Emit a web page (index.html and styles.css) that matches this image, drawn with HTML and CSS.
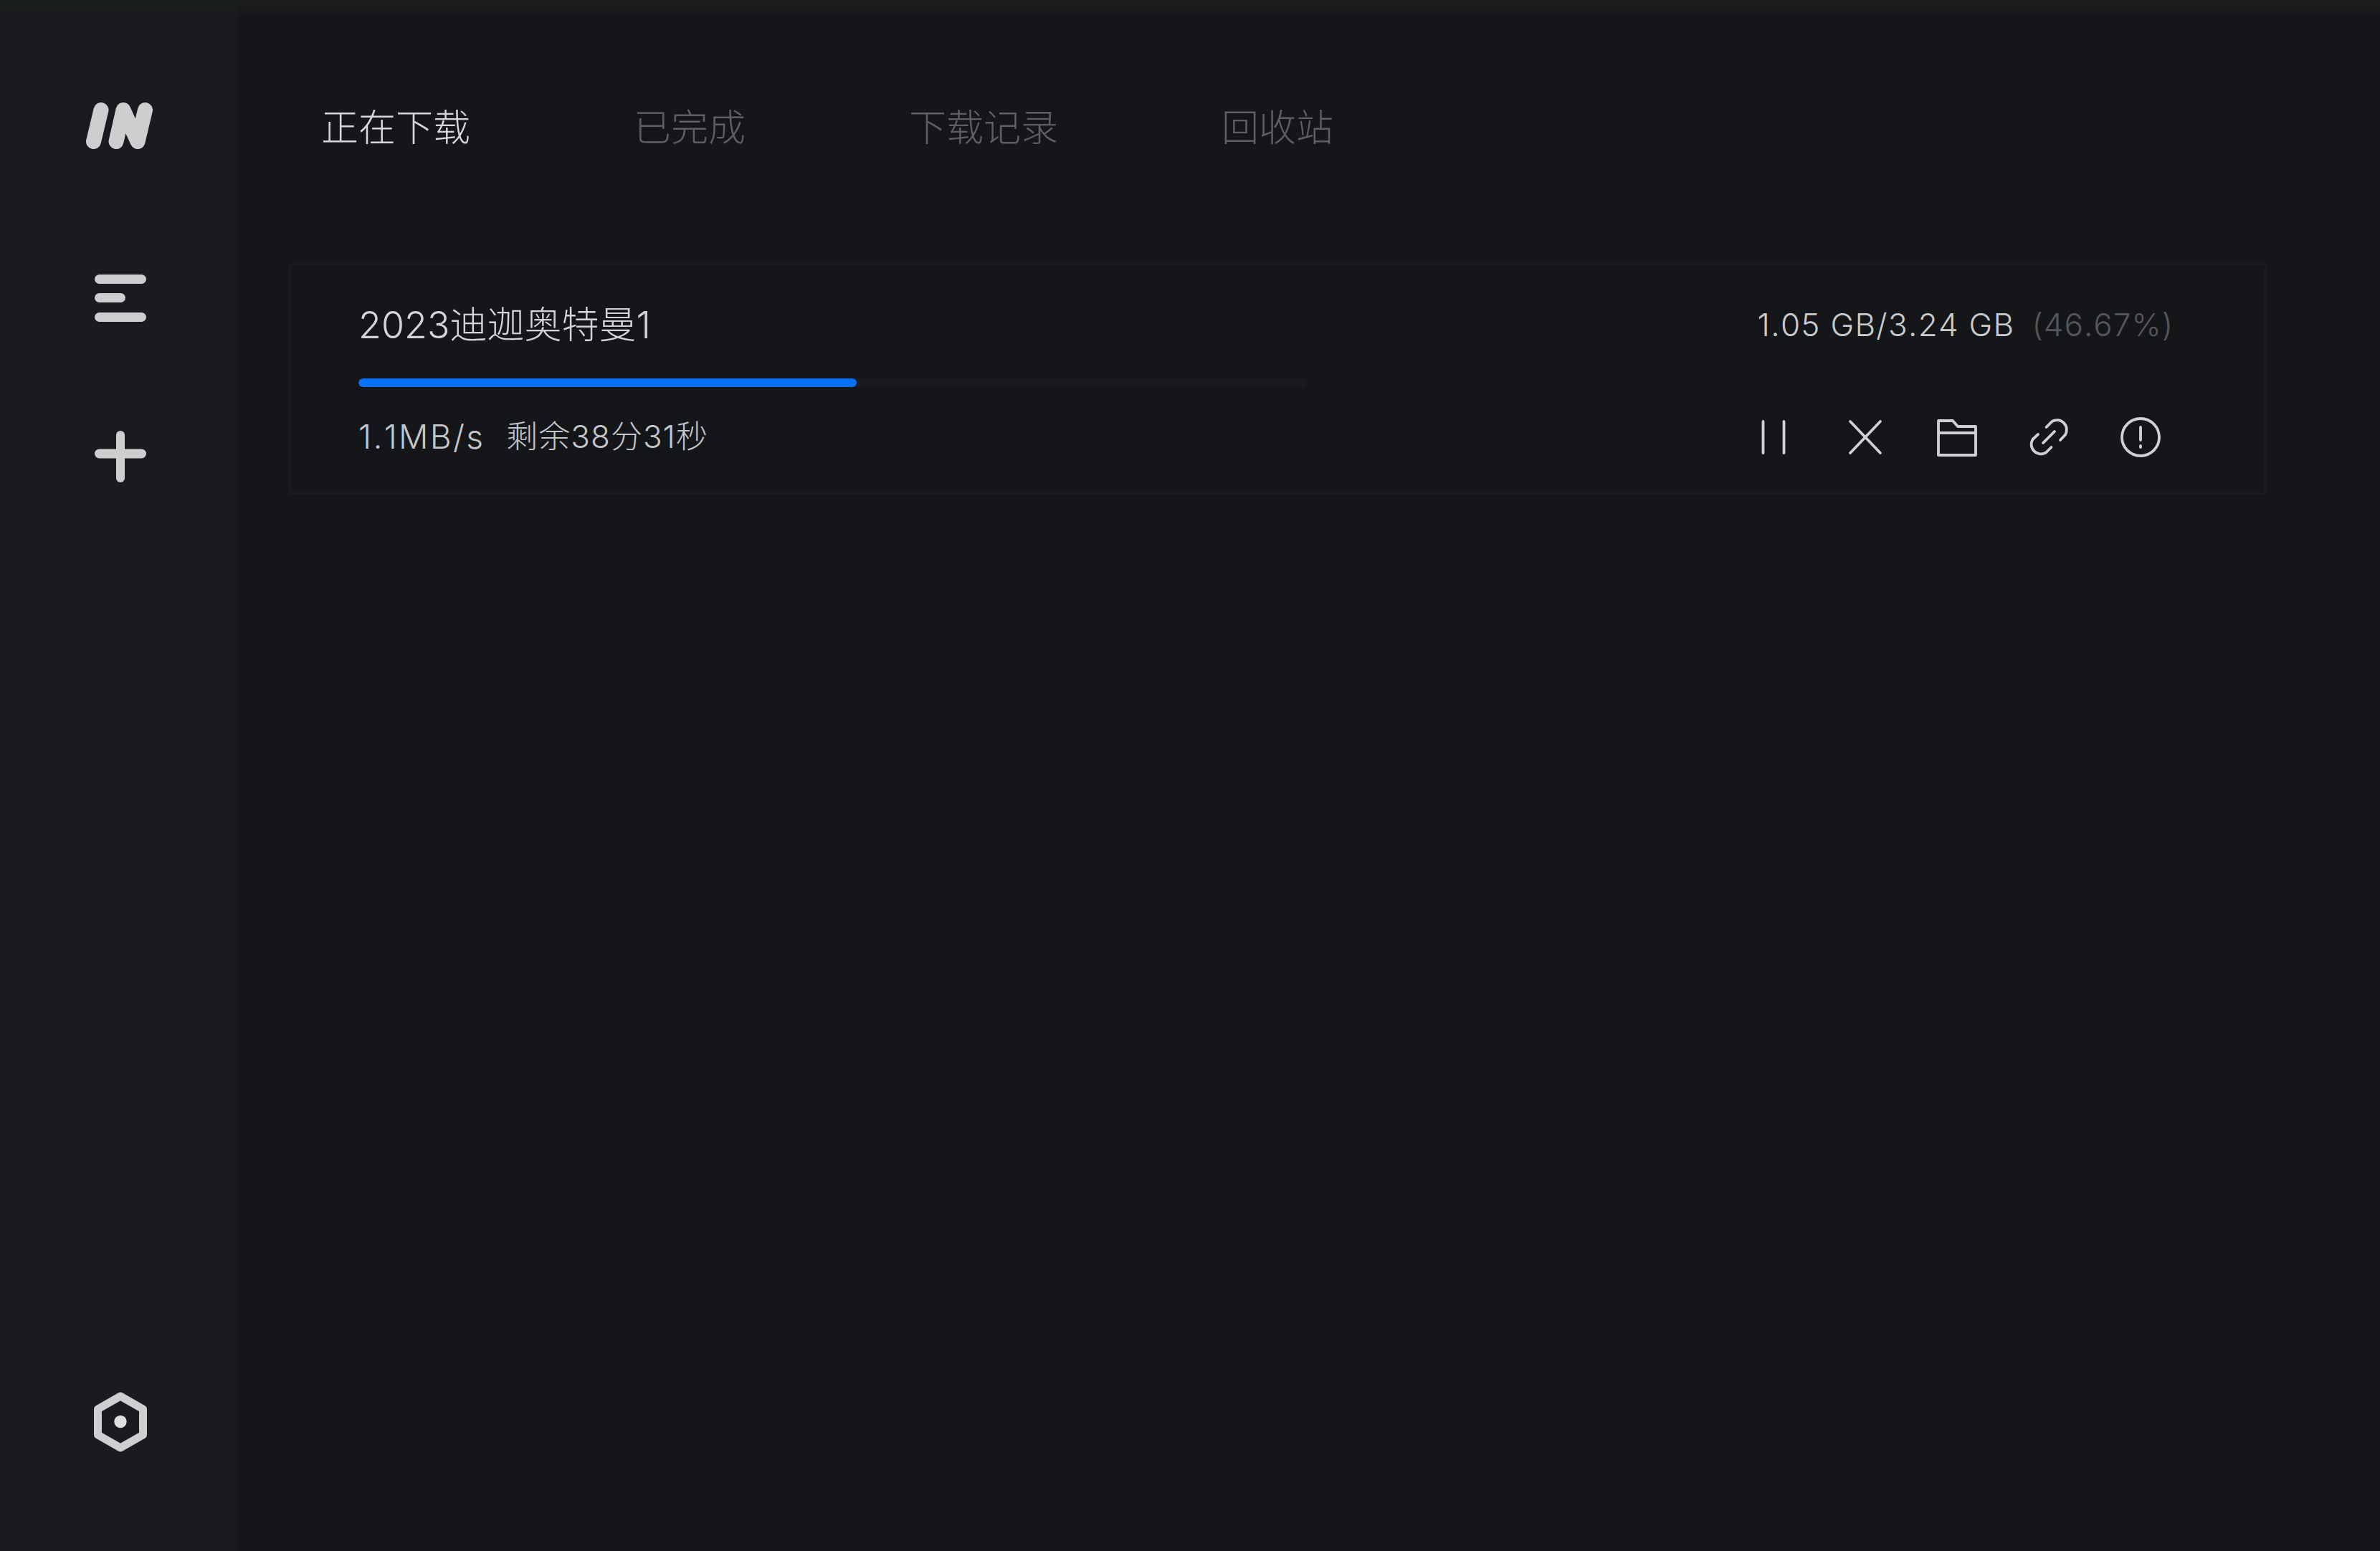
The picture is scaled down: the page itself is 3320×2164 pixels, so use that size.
FILE: index.html
```html
<!DOCTYPE html>
<html lang="zh-CN">
<head>
<meta charset="utf-8">
<title>正在下载</title>
<link rel="stylesheet" href="styles.css">
</head>
<body>
<div class="app">
  <aside class="sidebar">
    <svg class="logo" viewBox="0 0 93 65" width="93" height="65"><g fill="none" stroke="#cdced0" stroke-width="21" stroke-linecap="round" stroke-linejoin="round"><path d="M21 10.5 10.5 54.5"/><path d="M42 54.5 52 10.5 72 54.5 82.5 10.5"/></g></svg>
    <svg class="nav-icon menu" viewBox="0 0 72 66" width="72" height="66"><g fill="#cdced0"><rect x="0" y="0" width="72" height="13" rx="6.5"/><rect x="0" y="26" width="43" height="13" rx="6.5"/><rect x="0" y="53" width="72" height="13" rx="6.5"/></g></svg>
    <svg class="nav-icon plus" viewBox="0 0 72 72" width="72" height="72"><g fill="#cdced0"><rect x="0" y="25.5" width="72" height="13" rx="6.5"/><rect x="30" y="0" width="12" height="72" rx="6"/></g></svg>
    <svg class="nav-icon hex" viewBox="0 0 74 84" width="74" height="84"><path d="M37 6 68.5 24v36L37 78 5.500 60V24Z" fill="none" stroke="#cdced0" stroke-width="11" stroke-linejoin="round"/><circle cx="37" cy="41.500" r="8.700" fill="#dcdddf"/></svg>
  </aside>
  <main class="main">
    <nav class="tabs">
      <span class="tab active">正在下载</span>
      <span class="tab">已完成</span>
      <span class="tab">下载记录</span>
      <span class="tab">回收站</span>
    </nav>
    <section class="card">
      <div class="row top-row">
        <span class="title">2023迪迦奥特曼1</span>
        <span class="size">1.05 GB/3.24 GB<span class="pct">(46.67%)</span></span>
      </div>
      <div class="track"><div class="fill" style="width:52.6%"></div></div>
      <div class="row bottom-row">
        <span class="speed"><span class="rate">1.1MB/s</span><span class="remain">剩余38分31秒</span></span>
        <div class="actions">
          <svg class="act" viewBox="0 0 64 64" width="64" height="64"><path d="M17.500 10v44M46.500 10v44"/></svg>
          <svg class="act" viewBox="0 0 64 64" width="64" height="64"><path d="M11 10 53 54M53 10 11 54"/></svg>
          <svg class="act" viewBox="0 0 64 64" width="64" height="64"><path d="M6 9H26L33 17H58V57H6ZM6 26H58"/></svg>
          <svg class="act" viewBox="0 0 64 64" width="64" height="64"><path d="M28.500 18 36.500 10A13.500 13.500 0 0 1 55 28.500L48 36M35.500 46 28 53.500A13.500 13.500 0 0 1 9.500 35L17 28M24 40 40 24"/></svg>
          <svg class="act" viewBox="0 0 64 64" width="64" height="64"><circle cx="32" cy="32" r="26"/><path d="M32 18v18M32 44v2"/></svg>
        </div>
      </div>
    </section>
  </main>
</div>
</body>
</html>
```
FILE: styles.css
```css
* { box-sizing: border-box; }
html, body { margin: 0; height: 100%; }
body {
  background: #15161a;
  font-family: Inter, "Noto Sans CJK SC", sans-serif;
  font-weight: 300;
  font-kerning: none;
  color: #cdced0;
  overflow: hidden;
}
body::before {
  content: "";
  position: fixed;
  left: 0; right: 0; top: 0;
  height: 24px;
  background: linear-gradient(#1b1e1d, rgba(27, 30, 29, 0));
  pointer-events: none;
}
.app { display: flex; height: 2164px; }
.sidebar {
  width: 332px;
  flex: none;
  background: #1a1b1f;
  display: flex;
  flex-direction: column;
  align-items: center;
  padding-top: 143px;
}
.logo { display: block; }
.nav-icon { display: block; margin-left: 4px; }
.menu { margin-top: 175px; }
.plus { margin-top: 152px; }
.hex { margin-top: auto; margin-bottom: 138px; }
.main { flex: 1; padding: 143px 158px 0 71px; }
.tabs {
  display: flex;
  padding-left: 45px;
  font-size: 52px;
  line-height: 72px;
  color: #5e5f63;
}
.tab { margin-right: 228px; }
.tab.active { color: #d6d7d9; }
.card {
  margin-top: 152px;
  height: 323px;
  border: 3px solid #1b1c20;
  padding: 54px 127px 0 94px;
}
.row { display: flex; justify-content: space-between; align-items: center; }
.top-row { height: 60px; }
.title { font-size: 52px; line-height: 60px; color: #d3d4d6; }
.size { font-size: 44px; line-height: 60px; color: #c9cacc; margin-top: -2px; letter-spacing: 1.3px; }
.pct { margin-left: 24px; color: #55565a; letter-spacing: 1px; }
.track {
  width: 1322px;
  height: 12px;
  margin-top: 44px;
  border-radius: 6px;
  background: #1a1b1f;
  overflow: hidden;
}
.fill { height: 100%; border-radius: 6px; background: #0a70f5; }
.bottom-row { margin-top: 38px; padding-right: 13px; }
.speed { font-size: 44px; line-height: 64px; color: #c4c5c8; display: flex; margin-top: -2px; }
.rate { margin-right: 30px; font-size: 46px; letter-spacing: 2.3px; }
.remain { letter-spacing: 1px; }
.actions { display: flex; gap: 64px; margin-right: 1px; }
.act { fill: none; stroke: #d0d1d3; stroke-width: 3.800; stroke-linecap: round; stroke-linejoin: round; display: block; }
```
